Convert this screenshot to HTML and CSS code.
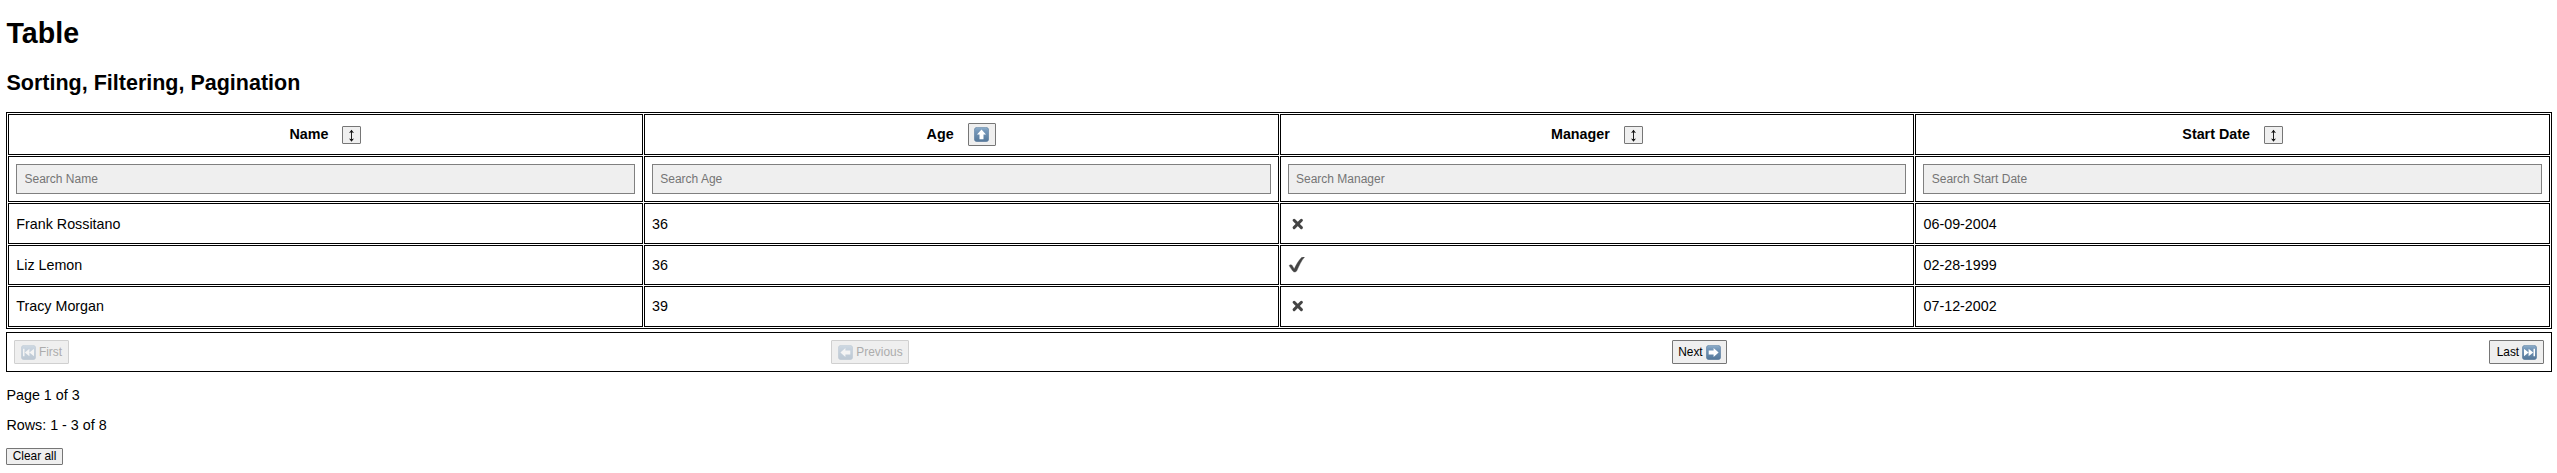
FILE: index.html
```html
<!DOCTYPE html>
<html lang="en">
<head>
<meta charset="utf-8">
<title>Table</title>
<link rel="stylesheet" href="styles.css">
</head>
<body>
<svg class="defs" width="0" height="0">
  <defs>
    <linearGradient id="tile" x1="0" y1="0" x2="0" y2="1">
      <stop offset="0" stop-color="#8fb0cb"/>
      <stop offset="0.25" stop-color="#7698ba"/>
      <stop offset="1" stop-color="#547799"/>
    </linearGradient>
    <symbol id="box" viewBox="0 0 15 15"><rect x="0.25" y="0.25" width="14.5" height="14.5" rx="3" fill="url(#tile)" stroke="#5c7d9c" stroke-width="0.5"/></symbol>
    <symbol id="arrow" viewBox="0 0 15 15"><path d="M12.600 7.500 7.600 3V5.500H2.700v4h4.900V12z" fill="#fff"/></symbol>
    <symbol id="skip" viewBox="0 0 15 15"><path d="M2 3.8 6.6 7.5 2 11.2zM6.6 3.8l4.6 3.7-4.6 3.7zM11.5 3.8H13v7.4h-1.5z" fill="#fff"/></symbol>
    <symbol id="sort" viewBox="0 0 7 13"><path d="M3.5 1.500v10" stroke="#222" stroke-width="1"/><path d="M3.500.7 6 4 3.500 3.200 1 4zM3.500 12.700 6 9.400 3.500 10.200 1 9.400z" fill="#111"/></symbol>
    <symbol id="cross" viewBox="0 0 16 16"><path d="M6.1 4.3 13.400 11.600M13.400 4.3 6.100 11.600" fill="none" stroke="#444" stroke-width="3" stroke-linecap="round"/></symbol>
    <symbol id="check" viewBox="0 0 17 16"><path d="M1.1 8.6c1-1.2 2.500-1.200 3.100-.1l2 3.500C8.300 7.500 10.500 3.700 13.500.6c.8-.6 2-.7 3-.5C13.100 4 11 9 8.900 13.500c-.7 1.600-2.900 2.200-4.100.6C3.500 12.500 2.300 10.500 1.100 8.600z" fill="#444" stroke="#444" stroke-width=".4"/></symbol>
  </defs>
</svg>
<h1 class="title">Table</h1>
<h2 class="subtitle">Sorting, Filtering, Pagination</h2>
<table class="grid">
  <thead>
    <tr class="row-head">
      <th><div class="head">Name<button class="sort"><svg width="7" height="13"><use href="#sort"/></svg></button></div></th>
      <th><div class="head">Age<button class="sort sort-active"><svg width="15" height="15"><use href="#box"/><use href="#arrow" transform="rotate(-90 7.5 7.5)"/></svg></button></div></th>
      <th><div class="head">Manager<button class="sort"><svg width="7" height="13"><use href="#sort"/></svg></button></div></th>
      <th><div class="head">Start Date<button class="sort"><svg width="7" height="13"><use href="#sort"/></svg></button></div></th>
    </tr>
    <tr class="row-filter">
      <th><input class="search" placeholder="Search Name"></th>
      <th><input class="search" placeholder="Search Age"></th>
      <th><input class="search" placeholder="Search Manager"></th>
      <th><input class="search" placeholder="Search Start Date"></th>
    </tr>
  </thead>
  <tbody>
    <tr class="row"><td>Frank Rossitano</td><td>36</td><td><svg class="mark" width="17" height="16"><use href="#cross" width="16" height="16"/></svg></td><td>06-09-2004</td></tr>
    <tr class="row row-short"><td>Liz Lemon</td><td>36</td><td><svg class="mark" width="17" height="16"><use href="#check"/></svg></td><td>02-28-1999</td></tr>
    <tr class="row row-last"><td>Tracy Morgan</td><td>39</td><td><svg class="mark" width="17" height="16"><use href="#cross" width="16" height="16"/></svg></td><td>07-12-2002</td></tr>
  </tbody>
</table>
<div class="pagination">
  <button class="page-btn first" disabled><svg width="15" height="15"><use href="#box"/><use href="#skip" transform="rotate(180 7.5 7.5)"/></svg>First</button>
  <button class="page-btn previous" disabled><svg width="15" height="15"><use href="#box"/><use href="#arrow" transform="rotate(180 7.5 7.5)"/></svg>Previous</button>
  <button class="page-btn next">Next<svg width="15" height="15"><use href="#box"/><use href="#arrow"/></svg></button>
  <button class="page-btn last">Last<svg width="15" height="15"><use href="#box"/><use href="#skip"/></svg></button>
</div>
<p class="info">Page 1 of 3</p>
<p class="info">Rows: 1 - 3 of 8</p>
<button class="clear">Clear all</button>
</body>
</html>
```
FILE: styles.css
```css
* { box-sizing: border-box; }
body {
  margin: 0;
  padding: 17px 5px 0 6px;
  background: #fff;
  color: #000;
  font: 14.3px/16px "Liberation Sans", Arial, sans-serif;
}
.defs { display: block; height: 0; }
.title { margin: 0 0 21px; padding-left: 0.5px; font-size: 28.6px; line-height: 33px; }
.subtitle { margin: 0 0 17px; padding-left: 0.5px; font-size: 21.5px; line-height: 24px; }

.grid {
  width: 100%;
  table-layout: fixed;
  border: 1px solid #000;
  border-collapse: separate;
  border-spacing: 1px;
}
.grid th, .grid td {
  border: 1px solid #000;
  padding: 0 7px;
  text-align: left;
  vertical-align: middle;
}
.grid td { padding-left: 7.3px; }
.row-head { height: 41px; }
.row-filter { height: 46px; }
.row { height: 41px; }
.row-short { height: 40px; }
.row-last td { padding-bottom: 2px; }
.head { display: flex; align-items: center; justify-content: center; height: 39px; padding-bottom: 1px; }
.mark { display: block; margin-left: -0.3px; }

button {
  display: inline-flex;
  align-items: center;
  justify-content: center;
  margin: 0;
  padding: 0;
  border: 1px solid #767676;
  border-radius: 1px;
  background: #efefef;
  color: #000;
  font: 11.9px/14px "Liberation Sans", Arial, sans-serif;
}
button svg { flex: none; display: block; }
.sort { width: 19px; height: 18px; margin: 2px 0 0 14px; padding-top: 1px; }
.sort-active { width: 28px; height: 23px; margin-top: 1px; padding-top: 0; }

.search {
  display: block;
  width: 100%;
  height: 30px;
  margin: 0;
  padding: 0 7.5px;
  border: 1px solid #808080;
  border-radius: 0;
  background: #efefef;
  font: 12px "Liberation Sans", Arial, sans-serif;
}
.search::placeholder { color: #757575; }

.pagination {
  display: flex;
  align-items: center;
  justify-content: space-between;
  height: 40px;
  margin: 3px 0 15px;
  padding: 0 6.6px 0 7px;
  border: 1px solid #000;
}
.page-btn { width: 55px; height: 24px; gap: 3px; }
.previous { width: 78px; }
.page-btn:disabled { border-color: #d0d0d0; color: #acacac; }
.page-btn:disabled svg { opacity: 0.32; }
.info { margin: 0 0 14px; padding-left: 0.5px; }
.info + .clear { width: 57px; height: 17px; padding-bottom: 1px; }
```
